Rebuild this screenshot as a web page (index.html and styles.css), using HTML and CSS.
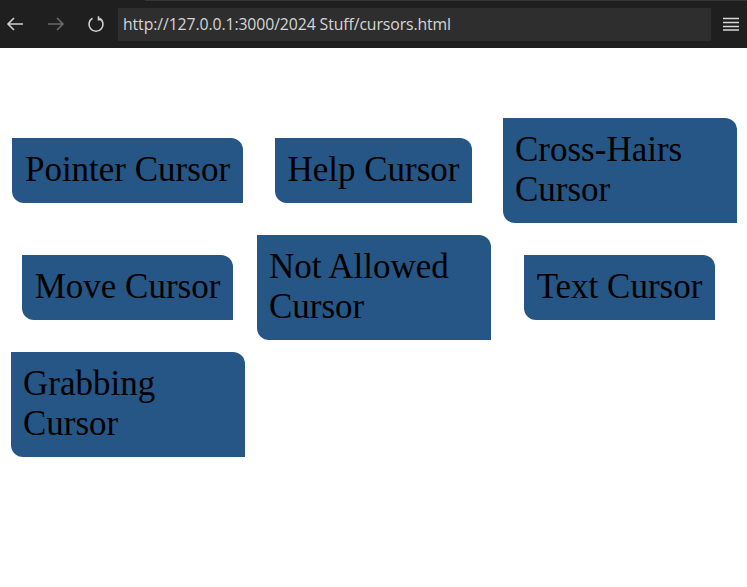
FILE: index.html
```html
<!DOCTYPE html>
<html>
<head>
<meta charset="utf-8">
<link rel="stylesheet" href="styles.css">
</head>
<body>
<div class="toolbar">
  <div class="topline"></div>
  <div class="bar">
    <svg class="nav back" width="18" height="16" viewBox="0 0 18 16"><path d="M17 8H2M8 2L2 8l6 6" fill="none" stroke="#d0d0d0" stroke-width="1.6"/></svg>
    <svg class="nav fwd" width="18" height="16" viewBox="0 0 18 16"><path d="M1 8h15M10 2l6 6-6 6" fill="none" stroke="#6a6a6a" stroke-width="1.6"/></svg>
    <svg class="nav reload" width="18" height="18" viewBox="0 0 18 18"><path d="M12.5 3.2A7 7 0 1 1 5.5 3.2" fill="none" stroke="#d0d0d0" stroke-width="1.6"/><path d="M11.5 1.2v3.4h3.4" fill="none" stroke="#d0d0d0" stroke-width="1.6"/></svg>
    <div class="address">http://127.0.0.1:3000/2024 Stuff/cursors.html</div>
    <svg class="menu" width="16" height="14" viewBox="0 0 16 14"><path d="M0 1.5h16M0 5.5h16M0 9.5h16M0 13h16" stroke="#d8d8d8" stroke-width="1.4"/></svg>
  </div>
</div>
<div class="page">
  <div class="grid">
    <div class="cell"><div class="btn">Pointer Cursor</div></div>
    <div class="cell"><div class="btn">Help Cursor</div></div>
    <div class="cell"><div class="btn">Cross-Hairs Cursor</div></div>
    <div class="cell"><div class="btn">Move Cursor</div></div>
    <div class="cell"><div class="btn">Not Allowed Cursor</div></div>
    <div class="cell"><div class="btn">Text Cursor</div></div>
    <div class="cell"><div class="btn">Grabbing Cursor</div></div>
  </div>
</div>
</body>
</html>
```
FILE: styles.css
```css
html, body {
  margin: 0;
  padding: 0;
  background: #ffffff;
}
.toolbar {
  background: #1f1f1f;
  height: 48px;
  display: flex;
  flex-direction: column;
}
.topline {
  height: 1px;
  margin-left: 145px;
  background: #353535;
}
.bar {
  display: flex;
  align-items: center;
  height: 47px;
  padding-bottom: 1px;
  box-sizing: border-box;
}
.nav {
  display: block;
  flex: none;
}
.back { margin-left: 6px; }
.fwd { margin-left: 23px; }
.reload { margin-left: 22px; }
.address {
  margin-left: 13px;
  width: 593px;
  height: 33px;
  background: #2e2e2e;
  color: #d6d6d6;
  font-family: "Open Sans", "Noto Sans", sans-serif;
  font-size: 15.8px;
  line-height: 33px;
  padding-left: 5px;
  box-sizing: border-box;
  white-space: nowrap;
  letter-spacing: -0.1px;
}
.menu {
  margin-left: 12px;
  display: block;
}
.page {
  padding: 70px 8px 8px;
}
.grid {
  display: grid;
  grid-template-columns: repeat(3, 234px);
  column-gap: 12px;
  row-gap: 12.5px;
  justify-content: center;
  align-items: center;
  justify-items: center;
}
.cell {
  display: flex;
  justify-content: center;
  width: 100%;
}
.btn {
  background: #255686;
  color: #000000;
  font-family: "Liberation Serif", "Times New Roman", serif;
  font-size: 35px;
  padding: 12.3px 12.5px;
  border-radius: 0 12px 0 12px;
  box-sizing: border-box;
}
```
